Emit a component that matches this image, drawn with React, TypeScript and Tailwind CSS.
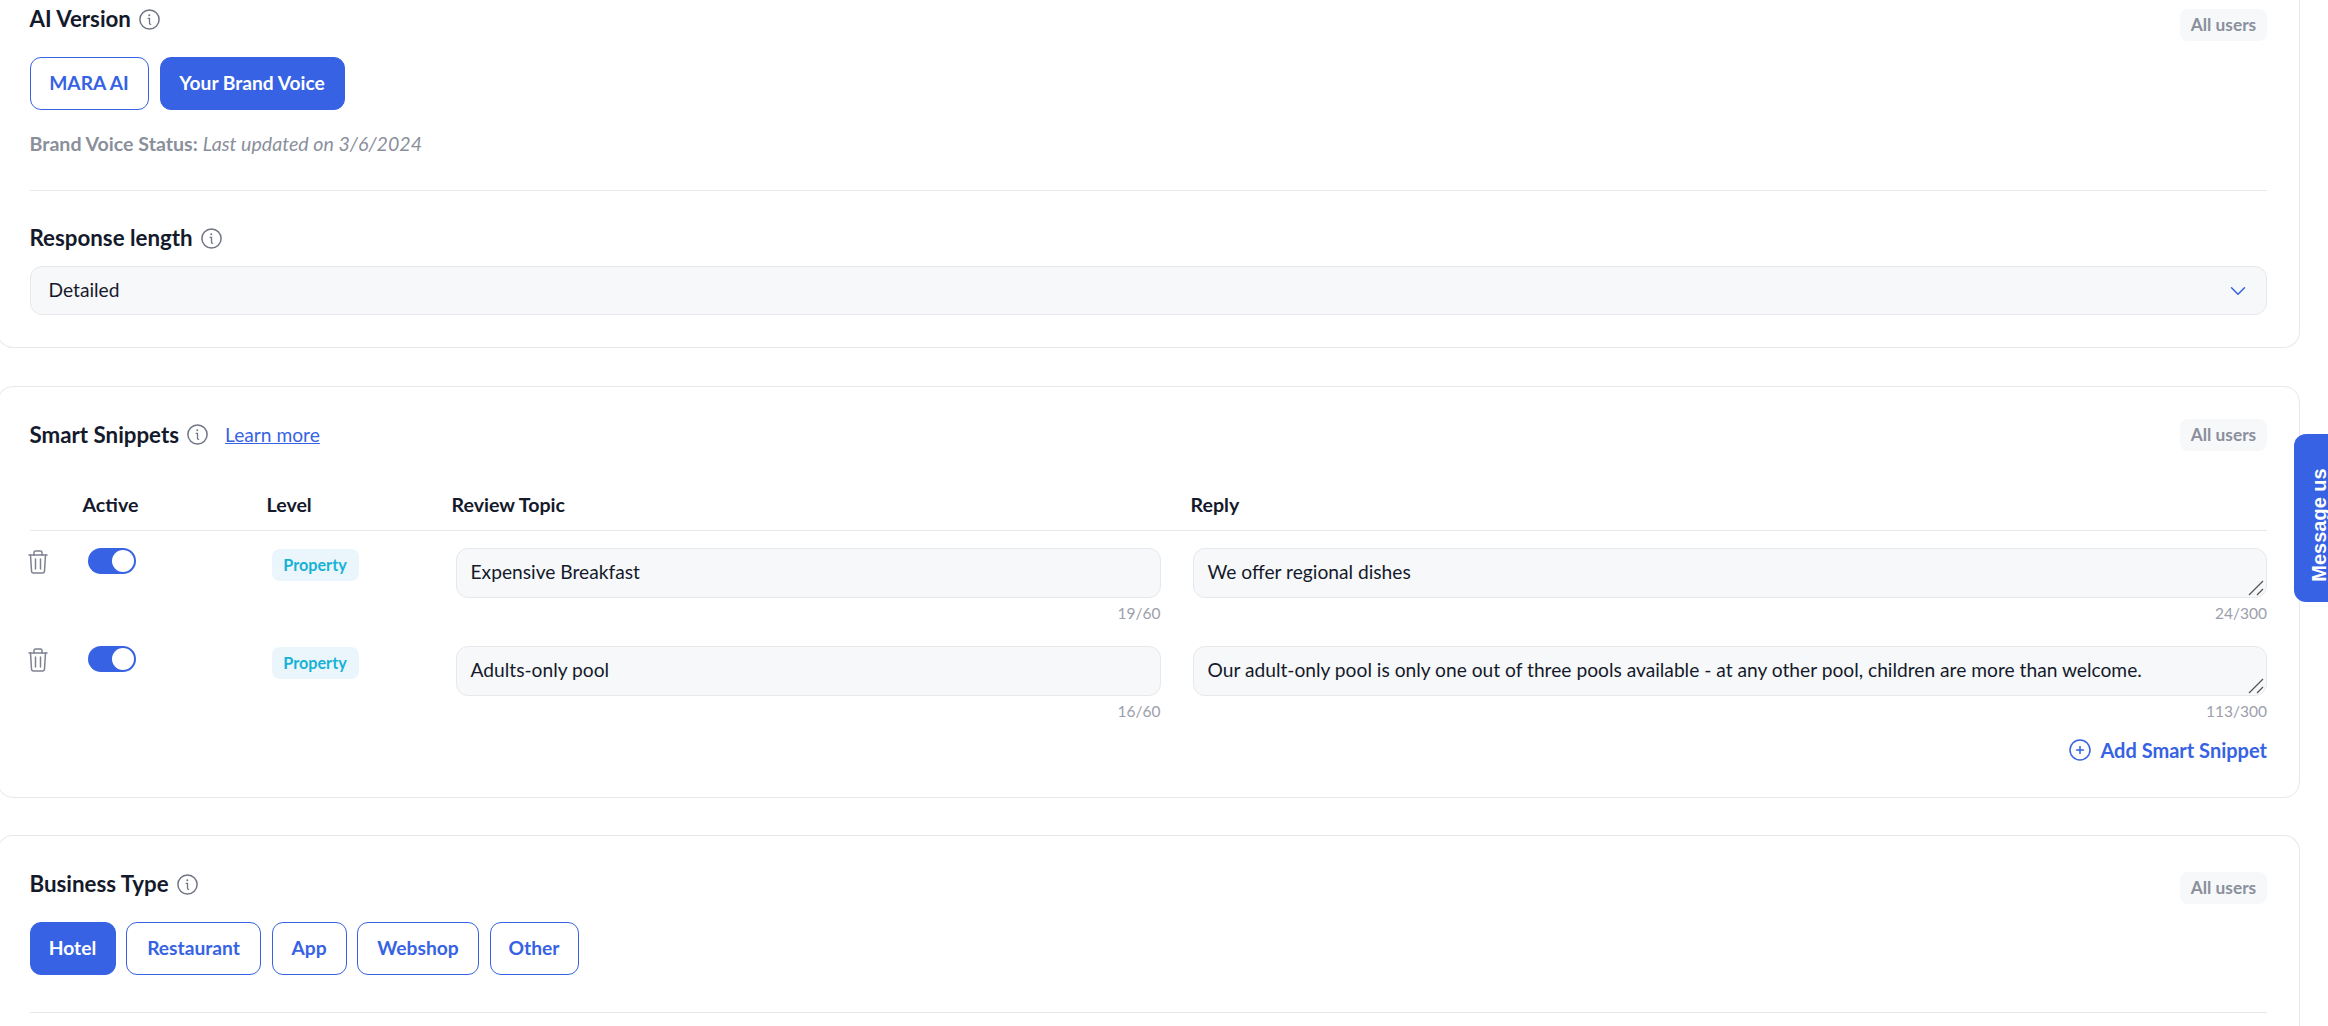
import { ChevronDown } from 'lucide-react';

function InfoIcon() {
  return (
    <svg viewBox="0 0 21 21" className="w-[21px] h-[21px] shrink-0" fill="none" stroke="#6f7583">
      <circle cx="10.5" cy="10.5" r="9.6" strokeWidth="1.5" />
      <circle cx="10.3" cy="6.300" r="1" fill="#6f7583" stroke="none" />
      <path d="M9.100 9.300h1.400v5c0 .8.300 1.100 1.100 1.100" strokeWidth="1.3" strokeLinecap="round" />
    </svg>
  );
}

function TrashIcon() {
  return (
    <svg viewBox="0 0 20 24" className="w-5 h-6" fill="none" stroke="#7d8390" strokeWidth="1.5" strokeLinecap="round" strokeLinejoin="round">
      <path d="M1 5h18" />
      <path d="M6 5V2.600C6 1.700 6.700 1 7.600 1h4.800c.9 0 1.600.7 1.600 1.600V5" />
      <path d="M2.500 5l1 16c.1 1.200.9 2 2 2h9c1.100 0 1.900-.8 2-2l1-16" />
      <path d="M7.500 9v10M12.500 9v10" />
    </svg>
  );
}

function PlusCircle() {
  return (
    <svg viewBox="0 0 22 22" className="w-[22px] h-[22px]" fill="none" stroke="#3662e3" strokeWidth="1.5" strokeLinecap="round">
      <circle cx="11" cy="11" r="10" />
      <path d="M11 7.500v7M7.500 11h7" />
    </svg>
  );
}

function Resizer() {
  return (
    <svg viewBox="0 0 16 16" className="absolute right-[2px] bottom-[1px] w-4 h-4" fill="none" stroke="#555555" strokeWidth="1.3">
      <path d="M1 15L15 1" />
      <path d="M9 15L15 9" />
    </svg>
  );
}

function AllUsers({ className = '' }: { className?: string }) {
  return (
    <span className={`h-8 w-[87px] flex items-center justify-center rounded-lg bg-[#f7f8fa] text-[17.3px] font-bold text-[#8a8f9c] ${className}`}>
      All users
    </span>
  );
}

function Heading({ children }: { children: string }) {
  return <h2 className="text-[22.3px] leading-[28px] font-bold text-[#141a2b]">{children}</h2>;
}

function Choice({ label, active, className }: { label: string; active?: boolean; className: string }) {
  return (
    <button
      className={`h-[53px] rounded-[11px] border border-[#3662e3] text-[19.2px] font-bold ${
        active ? 'bg-[#3662e3] text-white' : 'bg-white text-[#3662e3]'
      } ${className}`}
    >
      {label}
    </button>
  );
}

function Toggle() {
  return (
    <div className="w-12 h-[26px] rounded-full bg-[#3662e3] flex items-center justify-end pr-[2px]">
      <div className="w-[22px] h-[22px] rounded-full bg-white" />
    </div>
  );
}

function SnippetRow({ topic, topicCount, reply, replyCount }: { topic: string; topicCount: string; reply: string; replyCount: string }) {
  return (
    <div className="flex h-[98px]">
      <div className="w-[58px] pt-[2px]">
        <div className="ml-[-2px]"><TrashIcon /></div>
      </div>
      <div className="w-[184px]"><Toggle /></div>
      <div className="w-[184px] pt-px">
        <span className="inline-flex items-center justify-center w-[87px] h-8 rounded-lg bg-[#eaf6fb] text-[16.2px] font-bold text-[#18b2d6]">
          Property
        </span>
      </div>
      <div className="w-[705px]">
        <div className="h-[50px] rounded-xl border border-[#e6e8ec] bg-[#f7f8fa] pl-[14px] pt-[9px] text-[19.2px] leading-[28px] text-[#141a2b]">
          {topic}
        </div>
        <div className="mt-[5px] text-right text-[15.5px] leading-5 text-[#9ca0ab]">{topicCount}</div>
      </div>
      <div className="ml-[32px] flex-1">
        <div className="relative h-[50px] rounded-xl border border-[#e6e8ec] bg-[#f7f8fa] pl-[14px] pt-[9px] text-[19.2px] leading-[28px] text-[#141a2b]">
          {reply}
          <Resizer />
        </div>
        <div className="mt-[5px] text-right text-[15.5px] leading-5 text-[#9ca0ab]">{replyCount}</div>
      </div>
    </div>
  );
}

export default function App() {
  return (
    <div className="relative h-[1026px] overflow-hidden bg-white font-['Lato','Noto_Sans',sans-serif]">
      <div className="ml-[-3px] w-[2303px] flex flex-col gap-[38px]">
        {/* AI version + response length */}
        <section className="h-[348px] rounded-b-2xl border-x border-b border-[#e6e8ec] pl-[31.5px] pr-[32px] pt-[5px]">
          <div className="flex items-start justify-between">
            <div className="flex items-center gap-[8px]">
              <Heading>AI Version</Heading>
              <InfoIcon />
            </div>
            <AllUsers className="mt-[4px]" />
          </div>
          <div className="mt-[16px] flex gap-[11px]">
            <Choice label="MARA AI" className="w-[119px]" />
            <Choice label="Your Brand Voice" active className="w-[185px]" />
          </div>
          <p className="mt-[21px] text-[19.6px] leading-[26px] text-[#8a8f9c]">
            <span className="font-bold">Brand Voice Status:</span> <em>Last updated on 3/6/2024</em>
          </p>
          <div className="mt-[33px] h-px bg-[#e6e8ec]" />
          <div className="mt-[33px] flex items-center gap-[8px]">
            <Heading>Response length</Heading>
            <InfoIcon />
          </div>
          <div className="mt-[14px] h-[49px] rounded-xl border border-[#e6e8ec] bg-[#f7f8fa] pl-[18px] pr-[15px] flex items-center justify-between text-[19.2px] text-[#141a2b]">
            Detailed
            <ChevronDown className="w-[26px] h-[26px] text-[#3662e3]" strokeWidth={1.4} />
          </div>
        </section>

        {/* Smart snippets */}
        <section className="h-[412px] mb-[-1px] rounded-2xl border border-[#e6e8ec] pl-[31.5px] pr-[32px] pt-[32px]">
          <div className="flex items-center justify-between">
            <div className="flex items-center gap-[8px]">
              <Heading>Smart Snippets</Heading>
              <InfoIcon />
              <a className="ml-[9px] text-[19.2px] text-[#3662e3] underline">Learn more</a>
            </div>
            <AllUsers />
          </div>
          <div className="mt-[40px] h-[40px] flex border-b border-[#e6e8ec] text-[19.6px] leading-[28px] font-bold text-[#141a2b]">
            <span className="w-[53px]" />
            <span className="w-[184px]">Active</span>
            <span className="w-[185px]">Level</span>
            <span className="w-[739px]">Review Topic</span>
            <span>Reply</span>
          </div>
          <div className="mt-[17px]">
            <SnippetRow topic="Expensive Breakfast" topicCount="19/60" reply="We offer regional dishes" replyCount="24/300" />
            <SnippetRow
              topic="Adults-only pool"
              topicCount="16/60"
              reply="Our adult-only pool is only one out of three pools available - at any other pool, children are more than welcome."
              replyCount="113/300"
            />
          </div>
          <div className="-mt-[9px] flex justify-end items-center gap-[9px] text-[20px] font-bold text-[#3662e3]">
            <PlusCircle />
            Add Smart Snippet
          </div>
        </section>

        {/* Business type */}
        <section className="h-[300px] rounded-t-2xl border-x border-t border-[#e6e8ec] pl-[31.5px] pr-[32px] pt-[34px]">
          <div className="flex items-start justify-between">
            <div className="flex items-center gap-[8px]">
              <Heading>Business Type</Heading>
              <InfoIcon />
            </div>
            <AllUsers className="mt-[2px]" />
          </div>
          <div className="mt-[18px] flex gap-[10.5px]">
            <Choice label="Hotel" active className="w-[86px]" />
            <Choice label="Restaurant" className="w-[135px]" />
            <Choice label="App" className="w-[75px]" />
            <Choice label="Webshop" className="w-[122px]" />
            <Choice label="Other" className="w-[89px]" />
          </div>
          <div className="mt-[37px] h-px bg-[#e6e8ec]" />
        </section>
      </div>

      {/* Message us tab */}
      <div className="absolute right-0 top-[434px] w-[34px] h-[168px] rounded-l-xl bg-[#3662e3] flex items-center justify-end">
        <span className="-rotate-90 translate-x-[3px] translate-y-[7px] origin-center mr-[-44px] whitespace-nowrap font-['Liberation_Sans',sans-serif] text-[20px] font-bold text-white">Message us</span>
      </div>
    </div>
  );
}
